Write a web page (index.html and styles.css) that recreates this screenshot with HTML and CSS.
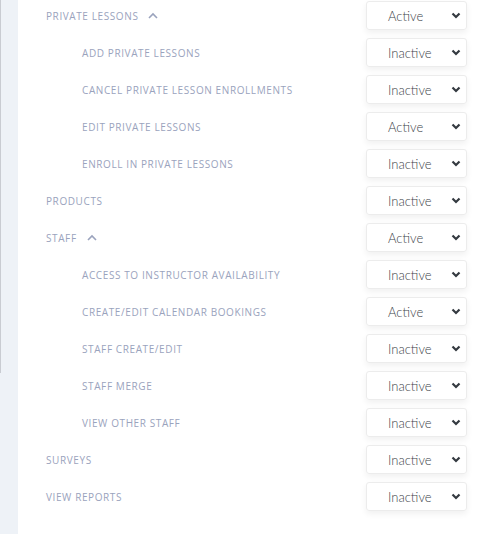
FILE: index.html
```html
<!DOCTYPE html>
<html>
<head>
<meta charset="utf-8">
<link rel="stylesheet" href="styles.css">
</head>
<body>
<div class="page">
  <div class="rail"><div class="scroll"></div></div>
  <div class="main">
    <div class="row"><div class="label">PRIVATE LESSONS <svg class="up" width="10" height="7" viewBox="0 0 10 7"><path d="M1 6 L5 2 L9 6" fill="none" stroke="#9aa3bd" stroke-width="1.6"/></svg></div><div class="sel"><span>Active</span><svg class="dn" width="10" height="7" viewBox="0 0 10 7"><path d="M1.5 1.5 L5 5 L8.5 1.5" fill="none" stroke="#343a40" stroke-width="2.2"/></svg></div></div>
    <div class="row sub"><div class="label">ADD PRIVATE LESSONS</div><div class="sel"><span>Inactive</span><svg class="dn" width="10" height="7" viewBox="0 0 10 7"><path d="M1.5 1.5 L5 5 L8.5 1.5" fill="none" stroke="#343a40" stroke-width="2.2"/></svg></div></div>
    <div class="row sub"><div class="label">CANCEL PRIVATE LESSON ENROLLMENTS</div><div class="sel"><span>Inactive</span><svg class="dn" width="10" height="7" viewBox="0 0 10 7"><path d="M1.5 1.5 L5 5 L8.5 1.5" fill="none" stroke="#343a40" stroke-width="2.2"/></svg></div></div>
    <div class="row sub"><div class="label">EDIT PRIVATE LESSONS</div><div class="sel"><span>Active</span><svg class="dn" width="10" height="7" viewBox="0 0 10 7"><path d="M1.5 1.5 L5 5 L8.5 1.5" fill="none" stroke="#343a40" stroke-width="2.2"/></svg></div></div>
    <div class="row sub"><div class="label">ENROLL IN PRIVATE LESSONS</div><div class="sel"><span>Inactive</span><svg class="dn" width="10" height="7" viewBox="0 0 10 7"><path d="M1.5 1.5 L5 5 L8.5 1.5" fill="none" stroke="#343a40" stroke-width="2.2"/></svg></div></div>
    <div class="row"><div class="label">PRODUCTS</div><div class="sel"><span>Inactive</span><svg class="dn" width="10" height="7" viewBox="0 0 10 7"><path d="M1.5 1.5 L5 5 L8.5 1.5" fill="none" stroke="#343a40" stroke-width="2.2"/></svg></div></div>
    <div class="row"><div class="label">STAFF <svg class="up" width="10" height="7" viewBox="0 0 10 7"><path d="M1 6 L5 2 L9 6" fill="none" stroke="#9aa3bd" stroke-width="1.6"/></svg></div><div class="sel"><span>Active</span><svg class="dn" width="10" height="7" viewBox="0 0 10 7"><path d="M1.5 1.5 L5 5 L8.5 1.5" fill="none" stroke="#343a40" stroke-width="2.2"/></svg></div></div>
    <div class="row sub"><div class="label">ACCESS TO INSTRUCTOR AVAILABILITY</div><div class="sel"><span>Inactive</span><svg class="dn" width="10" height="7" viewBox="0 0 10 7"><path d="M1.5 1.5 L5 5 L8.5 1.5" fill="none" stroke="#343a40" stroke-width="2.2"/></svg></div></div>
    <div class="row sub"><div class="label">CREATE/EDIT CALENDAR BOOKINGS</div><div class="sel"><span>Active</span><svg class="dn" width="10" height="7" viewBox="0 0 10 7"><path d="M1.5 1.5 L5 5 L8.5 1.5" fill="none" stroke="#343a40" stroke-width="2.2"/></svg></div></div>
    <div class="row sub"><div class="label">STAFF CREATE/EDIT</div><div class="sel"><span>Inactive</span><svg class="dn" width="10" height="7" viewBox="0 0 10 7"><path d="M1.5 1.5 L5 5 L8.5 1.5" fill="none" stroke="#343a40" stroke-width="2.2"/></svg></div></div>
    <div class="row sub"><div class="label">STAFF MERGE</div><div class="sel"><span>Inactive</span><svg class="dn" width="10" height="7" viewBox="0 0 10 7"><path d="M1.5 1.5 L5 5 L8.5 1.5" fill="none" stroke="#343a40" stroke-width="2.2"/></svg></div></div>
    <div class="row sub"><div class="label">VIEW OTHER STAFF</div><div class="sel"><span>Inactive</span><svg class="dn" width="10" height="7" viewBox="0 0 10 7"><path d="M1.5 1.5 L5 5 L8.5 1.5" fill="none" stroke="#343a40" stroke-width="2.2"/></svg></div></div>
    <div class="row"><div class="label">SURVEYS</div><div class="sel"><span>Inactive</span><svg class="dn" width="10" height="7" viewBox="0 0 10 7"><path d="M1.5 1.5 L5 5 L8.5 1.5" fill="none" stroke="#343a40" stroke-width="2.2"/></svg></div></div>
    <div class="row"><div class="label">VIEW REPORTS</div><div class="sel"><span>Inactive</span><svg class="dn" width="10" height="7" viewBox="0 0 10 7"><path d="M1.5 1.5 L5 5 L8.5 1.5" fill="none" stroke="#343a40" stroke-width="2.2"/></svg></div></div>
  </div>
</div>
</body>
</html>
```
FILE: styles.css
```css
html, body {
  margin: 0;
  padding: 0;
  background: #ffffff;
}
.page {
  display: flex;
  width: 503px;
  height: 534px;
  overflow: hidden;
}
.rail {
  width: 18px;
  flex: none;
  background: #eef2f7;
  position: relative;
}
.scroll {
  position: absolute;
  left: 0;
  top: 0;
  width: 1px;
  height: 373px;
  background: #c9ccd2;
}
.main {
  flex: 1;
  padding: 1px 36px 0 28px;
  display: flex;
  flex-direction: column;
  gap: 8px;
}
.row {
  display: flex;
  align-items: center;
  justify-content: space-between;
  height: 29px;
}
.row.sub .label {
  padding-left: 36px;
}
.label {
  font-family: "Open Sans", sans-serif;
  font-size: 10px;
  letter-spacing: 0.6px;
  color: #9aa3bd;
  display: flex;
  align-items: center;
  gap: 6px;
}
.up {
  margin-left: 4px;
}
.sel {
  height: 27px;
  border: 1px solid #ececec;
  border-radius: 3px;
  box-shadow: 0 3px 6px rgba(0, 0, 0, 0.06);
  display: flex;
  align-items: center;
  justify-content: space-between;
  padding: 0 5px 0 21px;
  box-sizing: content-box;
  width: 73px;
  font-family: Lato, sans-serif;
  font-size: 13px;
  font-weight: 300;
  color: #3d4349;
}
.dn {
  display: block;
}
```
